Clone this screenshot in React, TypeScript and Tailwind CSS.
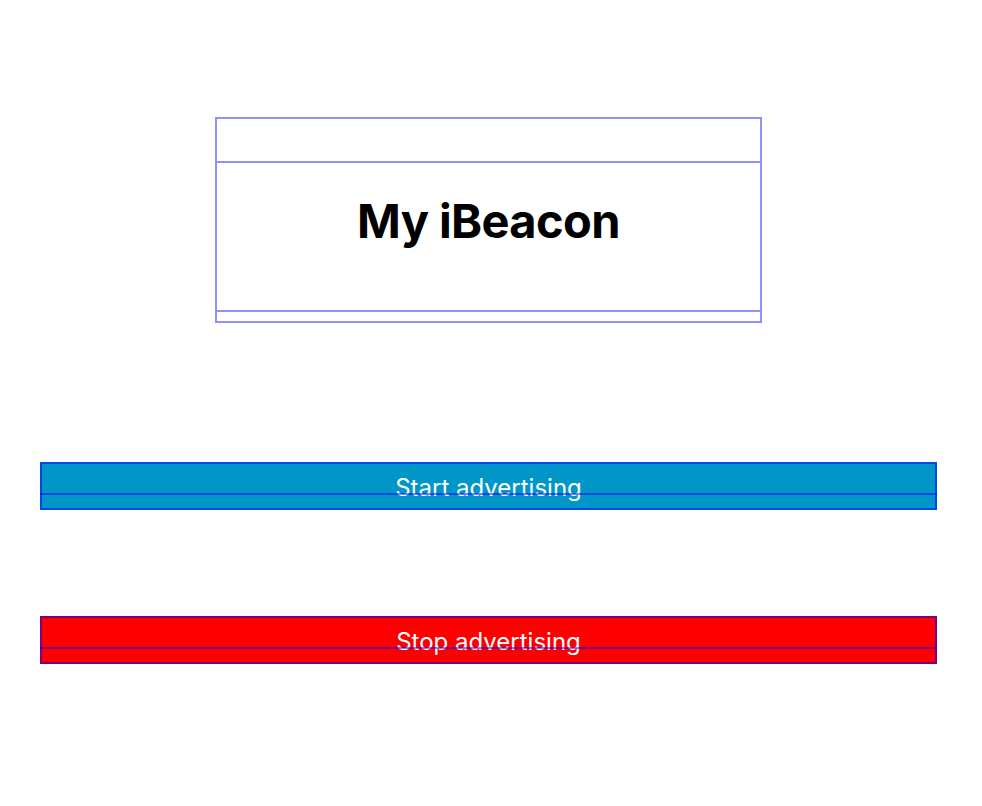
import React from "react";

export default function App() {
  const iniciar = () => {};
  const parar = () => {};

  return (
    <div className="min-h-[806px] w-[982px] bg-white" style={{ fontFamily: "Inter, 'Noto Sans', sans-serif" }}>
      <div className="ml-[40px] w-[897px] pt-[117px]">
        {/* titulo */}
        <div className="mx-auto w-[547px] border-2 border-[#0000ff70]">
          <div className="h-[42px]"></div>
          <div className="h-[151px] border-y-2 border-[#0000ff70] pt-[34px] text-center">
            <h1 className="text-[47px] leading-[48px] font-bold tracking-[-0.6px] text-black">My iBeacon</h1>
          </div>
          <div className="h-[9px]"></div>
        </div>

        {/* botones */}
        <button
          onClick={iniciar}
          className="relative mt-[139px] block h-[48px] w-full border-2 border-[#0000ff80] bg-[#0096c8] text-center text-[24px] leading-[44px] text-white"
        >
          <span className="block translate-y-[2px]">Start advertising</span>
          <div className="pointer-events-none absolute left-[-2px] right-[-2px] top-[-2px] h-[33px] border-b-2 border-[#0000ff80]"></div>
        </button>

        <button
          onClick={parar}
          className="relative mt-[106px] block h-[48px] w-full border-2 border-[#0000ff80] bg-[#ff0000] text-center text-[24px] leading-[44px] text-white"
        >
          <span className="block translate-y-[2px]">Stop advertising</span>
          <div className="pointer-events-none absolute left-[-2px] right-[-2px] top-[-2px] h-[33px] border-b-2 border-[#0000ff80]"></div>
        </button>
      </div>
    </div>
  );
}
